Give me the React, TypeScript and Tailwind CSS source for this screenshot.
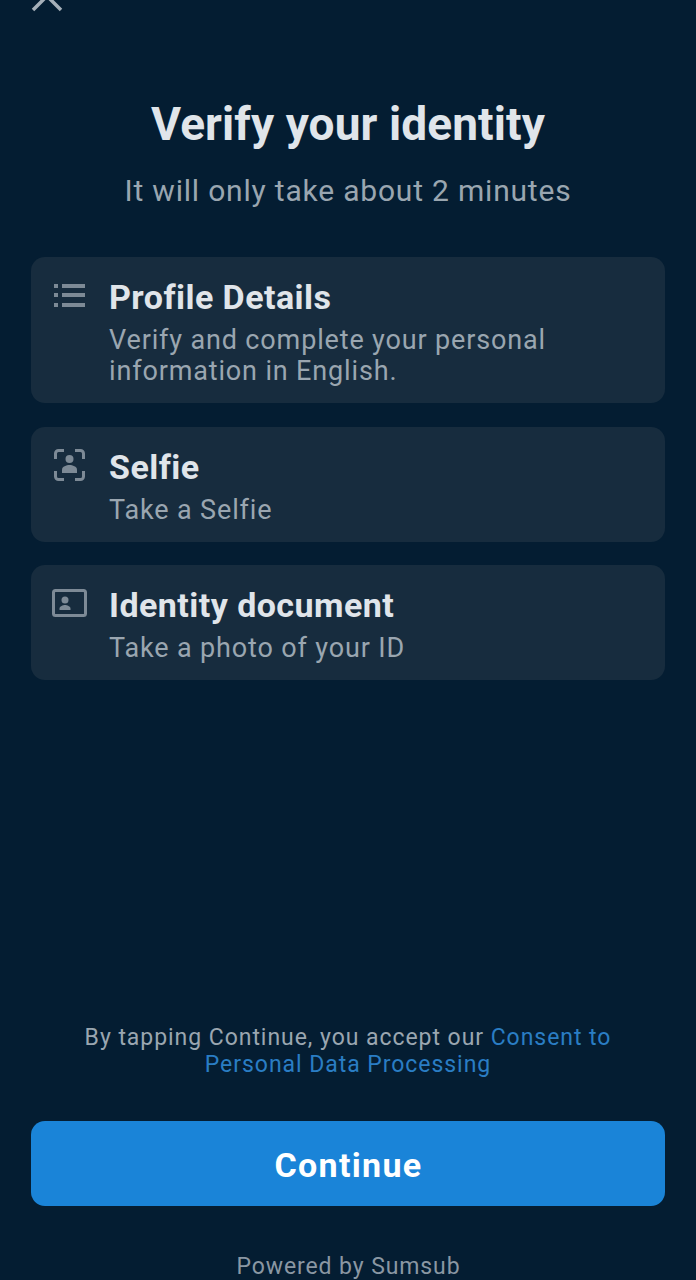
import type { ReactNode } from "react";

const font = { fontFamily: "Roboto, sans-serif" };

function ListIcon() {
  return (
    <svg width="34" height="30" viewBox="0 0 34 30" fill="#7d8a96">
      <rect x="2" y="6" width="4" height="4" />
      <rect x="2" y="15" width="4" height="4" />
      <rect x="2" y="25" width="4" height="4" />
      <rect x="10" y="6" width="23" height="4" />
      <rect x="10" y="15" width="23" height="4" />
      <rect x="10" y="25" width="23" height="4" />
    </svg>
  );
}

function SelfieIcon() {
  return (
    <svg width="34" height="34" viewBox="0 0 34 34" fill="none">
      <path
        d="M3.500 11V5.500a3 3 0 0 1 3-3H12M23 2.500h5.500a3 3 0 0 1 3 3V11M31.500 23v5.500a3 3 0 0 1-3 3H23M12 31.500H6.500a3 3 0 0 1-3-3V23"
        stroke="#7d8a96"
        strokeWidth="3"
      />
      <circle cx="17.500" cy="11" r="4" fill="#7d8a96" />
      <path d="M10 25v-3.500c0-2.800 4.500-4.500 7.500-4.500s7.500 1.700 7.500 4.500V25z" fill="#7d8a96" />
    </svg>
  );
}

function IdIcon() {
  return (
    <svg width="36" height="32" viewBox="0 0 36 32" fill="none">
      <rect x="1.500" y="4.500" width="32" height="25" rx="2" stroke="#7d8a96" strokeWidth="3" />
      <circle cx="13" cy="14" r="3.500" fill="#7d8a96" />
      <path d="M7.500 24v-1.500c0-2 3.500-3.500 5.500-3.500s5.500 1.500 5.500 3.500V24z" fill="#7d8a96" />
    </svg>
  );
}

function Card({ icon, title, children }: { icon: ReactNode; title: string; children: ReactNode }) {
  return (
    <div className="flex rounded-[14px] bg-[#172c3e] pl-[21px] pr-4 pt-[20px] pb-[16px]">
      <div className="mt-px w-[57px] shrink-0">{icon}</div>
      <div>
        <h2 className="text-[34px] leading-[40px] font-bold tracking-[0.45px] text-[#e0e5ea]">{title}</h2>
        <p className="mt-[8px] text-[27px] leading-[31px] tracking-[0.85px] text-[#9aa6b0]">{children}</p>
      </div>
    </div>
  );
}

export default function App() {
  return (
    <div style={font} className="w-[696px] h-[1280px] overflow-hidden bg-[#041d32] flex flex-col px-[31px]">
      <svg width="32" height="14" viewBox="0 0 32 14" fill="none" stroke="#a6b0b9" strokeWidth="3.5">
        <path d="M2 10L16 -4L30 10" />
      </svg>
      <h1 className="mt-[83px] text-center text-[46px] leading-[54px] font-bold tracking-[0.1px] text-[#e0e5ea]">
        Verify your identity
      </h1>
      <p className="mt-[22px] text-center text-[30px] leading-[36px] tracking-[0.8px] text-[#9aa6b0]">
        It will only take about 2 minutes
      </p>

      <div className="mt-[48px] flex flex-col gap-[23.5px]">
        <Card icon={<ListIcon />} title="Profile Details">
          Verify and complete your personal information in English.
        </Card>
        <Card icon={<SelfieIcon />} title="Selfie">
          Take a Selfie
        </Card>
        <Card icon={<IdIcon />} title="Identity document">
          Take a photo of your ID
        </Card>
      </div>

      <p className="mt-auto px-[40px] text-center text-[23px] leading-[27px] tracking-[0.95px] text-[#9aa6b0]">
        By tapping Continue, you accept our <span className="text-[#2a7dc4]">Consent to Personal Data Processing</span>
      </p>
      <button className="mt-[43px] h-[85px] w-full rounded-[14px] bg-[#1a84d8] pt-[3px] pl-[1px] text-[34px] font-bold tracking-[1.3px] text-white">
        Continue
      </button>
      <p className="mt-[47px] mb-[-1px] pl-[1px] text-center text-[23px] leading-[28px] tracking-[0.9px] text-[#8a97a3]">
        Powered by Sumsub
      </p>
    </div>
  );
}
